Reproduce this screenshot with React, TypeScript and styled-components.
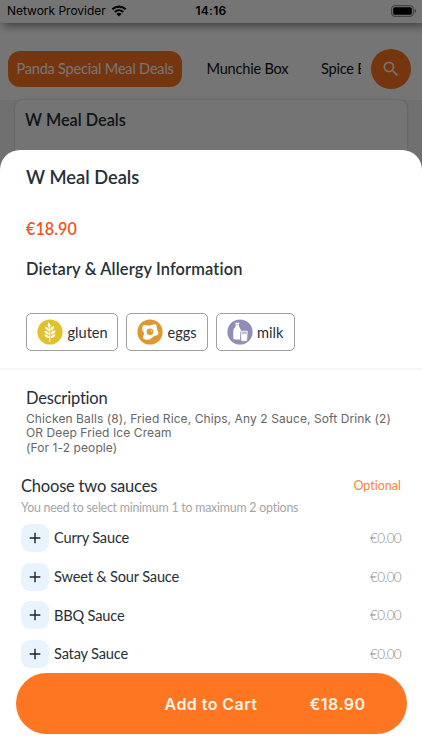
import React from "react";
import styled, { createGlobalStyle } from "styled-components";

const GlobalStyle = createGlobalStyle`
  *, *::before, *::after { box-sizing: border-box; }
  body { margin: 0; background: #fff; font-variant-ligatures: none; }
  button { font-variant-ligatures: none; }
`;

const Screen = styled.div`
  position: relative;
  width: 422px;
  height: 750px;
  overflow: hidden;
  background: #f4f4f4;
  font-family: Lato, "Liberation Sans", sans-serif;
  color: #263036;
`;

const StatusBar = styled.header`
  position: relative;
  display: grid;
  grid-template-columns: 1fr auto 1fr;
  align-items: center;
  height: 23px;
  padding: 0 5px 1px 7px;
  background: #fff;
  box-shadow: 3px 3px 8px rgba(0, 0, 0, 0.45);
  font-family: Inter, sans-serif;
  font-size: 12px;
  line-height: 22px;
  color: #000;
`;

const Carrier = styled.div`
  display: flex;
  align-items: center;
  gap: 5px;
  letter-spacing: -0.02px;
`;

const Clock = styled.div`
  margin-left: -2px;
  font-weight: 600;
  letter-spacing: 0.3px;
`;

const BatterySlot = styled.div`
  display: flex;
  justify-content: flex-end;
`;

const CategoryBar = styled.nav`
  display: flex;
  align-items: center;
  height: 77px;
  padding: 15px 11px 0 8px;
  background: #fff;
`;

const Categories = styled.div`
  display: flex;
  align-items: center;
  width: 353px;
  overflow: hidden;
  white-space: nowrap;
`;

const Category = styled.button<{ $active?: boolean }>`
  flex: none;
  height: 36px;
  padding: 0 8.4px;
  margin-right: 16px;
  border: 0;
  border-radius: 12px;
  background: ${(p) => (p.$active ? "#ff7622" : "transparent")};
  color: ${(p) => (p.$active ? "#fff" : "#111")};
  font-family: Lato, sans-serif;
  font-weight: 400;
  font-size: 14.6px;
  line-height: 36px;
  letter-spacing: -0.23px;
`;

const SearchButton = styled.button`
  display: flex;
  align-items: center;
  justify-content: center;
  flex: none;
  width: 40px;
  height: 40px;
  margin-left: 10px;
  padding: 0;
  border: 0;
  border-radius: 50%;
  background: #ff7622;
  color: #fff;
`;

const MenuCard = styled.section`
  height: 120px;
  margin: 0 15px;
  padding: 8px 10px;
  border-radius: 8px;
  background: #fcfcfc;
  box-shadow: 0 0 3px rgba(0, 0, 0, 0.22);
  font-weight: 600;
  font-size: 16.3px;
  line-height: 24px;
`;

const Scrim = styled.div`
  position: absolute;
  inset: 0;
  background: rgba(0, 0, 0, 0.54);
`;

const Sheet = styled.main`
  position: absolute;
  inset: 150px 0 0;
  display: flex;
  flex-direction: column;
  border-radius: 20px 20px 0 0;
  background: #fff;
`;

const Summary = styled.section`
  height: 220px;
  padding: 14px 26px 0;
  border-bottom: 2px solid #f6f6f6;
`;

const Title = styled.h1`
  margin: 0;
  font-weight: 600;
  font-size: 18.3px;
  line-height: 26px;
`;

const Price = styled.div`
  margin-top: 27px;
  color: #f4511e;
  font-weight: 600;
  font-size: 16.2px;
  line-height: 24px;
`;

const Subtitle = styled.h2`
  margin: 15.5px 0 0;
  font-weight: 600;
  font-size: 16.4px;
  line-height: 24px;
  letter-spacing: 0.14px;
`;

const Allergens = styled.div`
  display: flex;
  gap: 8px;
  margin-top: 32.5px;
`;

const Allergen = styled.div<{ $width: number }>`
  display: flex;
  align-items: center;
  gap: 4.5px;
  width: ${(p) => p.$width}px;
  height: 38px;
  padding-left: 10px;
  border: 1px solid #a0a0a0;
  border-radius: 5px;
  font-size: 14.6px;
`;

const Description = styled.section`
  height: 105px;
  padding: 16px 26px 0;
`;

const SectionHeading = styled.h3`
  margin: 0;
  font-weight: 400;
  font-size: 16.5px;
  line-height: 24px;
  letter-spacing: -0.2px;
`;

const Details = styled.p`
  margin: 2px -10px 0 0;
  color: #666;
  font-family: Inter, sans-serif;
  font-size: 12px;
  line-height: 14.4px;
  letter-spacing: 0.09px;
  white-space: pre-line;
`;

const OptionGroup = styled.section`
  padding: 0 21px;
`;

const GroupHeader = styled.div`
  display: flex;
  align-items: center;
  justify-content: space-between;
  height: 21px;
`;

const OptionalTag = styled.span`
  color: #ff7f3a;
  font-size: 12.5px;
`;

const Hint = styled.p`
  margin: 3px 0 1.5px;
  color: #a5a5a5;
  font-size: 12.4px;
  line-height: 18px;
  letter-spacing: -0.23px;
  white-space: nowrap;
`;

const OptionRow = styled.div`
  display: flex;
  align-items: center;
  height: 38.7px;
  font-size: 14.6px;
  letter-spacing: -0.18px;
`;

const AddOption = styled.button`
  display: flex;
  align-items: center;
  justify-content: center;
  width: 28px;
  height: 28px;
  margin-right: 5px;
  padding: 0;
  border: 0;
  border-radius: 9px;
  background: #e8f3fe;
  color: #1c2226;
`;

const OptionPrice = styled.span`
  margin-left: auto;
  color: #8c8c8c;
  font-weight: 300;
  font-size: 13.5px;
  letter-spacing: -0.7px;
`;

const CartButton = styled.button`
  position: absolute;
  left: 15.5px;
  bottom: 16px;
  display: grid;
  grid-template-columns: 1fr auto 1fr;
  align-items: center;
  width: 391px;
  height: 61px;
  padding: 0;
  border: 0;
  border-radius: 31px;
  background: #ff7622;
  color: #fff3e6;
  font-family: Inter, sans-serif;
  font-weight: 600;
  font-size: 16px;
  line-height: 24px;
  letter-spacing: 0.45px;
`;

const CartLabel = styled.span`
  grid-column: 2;
`;

const CartTotal = styled.span`
  justify-self: end;
  padding-right: 41px;
`;

const WifiIcon = () => (
  <svg width="16" height="12" viewBox="0 0 16 12">
    <path d="M1.3 4.3a9.8 9.8 0 0 1 13.4 0M3.8 6.9a6.2 6.2 0 0 1 8.4 0" fill="none" stroke="#000" strokeWidth="2.1" />
    <path d="M8 11.5 5.4 8.9a3.8 3.8 0 0 1 5.2 0Z" />
  </svg>
);

const BatteryIcon = () => (
  <svg width="26" height="12" viewBox="0 0 26 12">
    <rect x=".7" y=".7" width="21.6" height="10.6" rx="2.8" fill="none" stroke="#777" />
    <rect x="2.2" y="2.2" width="18.6" height="7.6" rx="1.5" />
    <path d="M23.8 4v4q1.4-.6 1.4-2t-1.4-2Z" fill="#777" />
  </svg>
);

const SearchIcon = () => (
  <svg width="20" height="20" viewBox="0 0 24 24" fill="currentColor">
    <path d="M15.5 14h-.79l-.28-.27A6.47 6.47 0 0 0 16 9.5 6.5 6.5 0 1 0 9.5 16c1.61 0 3.09-.59 4.23-1.57l.27.28v.79l5 4.99L20.49 19l-4.99-5Zm-6 0A4.5 4.5 0 1 1 14 9.5 4.49 4.49 0 0 1 9.5 14Z" />
  </svg>
);

const PlusIcon = () => (
  <svg width="12" height="12" viewBox="0 0 12 12">
    <path d="M6 .7v10.6M.7 6h10.6" stroke="currentColor" strokeWidth="1.4" />
  </svg>
);

const GlutenIcon = () => (
  <svg width="26" height="26" viewBox="0 0 26 26">
    <circle cx="13" cy="13" r="12.6" fill="#e2c12e" />
    <path d="M12.8 22.5V9" stroke="#fff" strokeWidth="1" />
    <g fill="#fff">
      <path d="M11.5 3.5c2.6 1.8 2.8 4 1 6-2-1.8-2.500-4-1-6Z" />
      <path d="M8.2 7.8c2.6.6 3.9 2 4 4.2-2.4-.4-4-1.9-4-4.2Z" />
      <path d="M7.2 11.7c3.1.3 4.7 1.7 5.1 3.8-2.9 0-4.7-1.4-5.1-3.8Z" />
      <path d="M7.4 15.6c2.9.2 4.5 1.4 4.9 3.5-2.8 0-4.5-1.2-4.9-3.5Z" />
      <path d="M16.8 7c.5 2.3-.6 4-3.2 4.8-.3-2.2.8-4 3.2-4.8Z" />
      <path d="M18.4 11.2c0 2.5-1.5 4-4.7 4.2.1-2.4 1.7-3.9 4.7-4.2Z" />
      <path d="M18.4 15.2c-.2 2.4-1.7 3.7-4.7 3.8.2-2.2 1.7-3.6 4.7-3.8Z" />
    </g>
  </svg>
);

const EggIcon = () => (
  <svg width="26" height="26" viewBox="0 0 26 26">
    <circle cx="13" cy="13" r="12.6" fill="#de982c" />
    <path
      d="M6.2 6.6c1.5-1.4 3.6.1 5.8 0 2.5-.1 4.4-2 6.2-1.3 1.8.7 1.4 3.1 1.9 4.9.5 1.9 1.9 3.3 1.2 4.9-.8 1.8-3 1.3-4.7 2.3-1.8 1-2.9 3.2-5.6 3.3-2.2.1-4.7-.6-5.1-2.3-.4-1.6 1.4-2.4 1.2-4-.2-1.4-1.800-2.200-2-4.100-.1-1.400.1-2.800 1.100-3.700Z"
      fill="#fff"
    />
    <circle cx="13" cy="12.8" r="3.3" fill="#de982c" />
    <path d="M13.300 11.100a1.900 1.900 0 0 1 1.500 2" fill="none" stroke="#fff" strokeWidth=".6" />
  </svg>
);

const MilkIcon = () => (
  <svg width="26" height="26" viewBox="0 0 26 26">
    <circle cx="13" cy="13" r="12.6" fill="#918db4" />
    <path d="M8.4 3.7h4v1.2h-.4v2.3c.2 1.7 1.9 2.3 1.9 4.2v1h-.8v8H7.6c-.9 0-1.3-.5-1.3-1.3v-7.7c0-2 2-2.5 2.4-4.2V4.9h-.3Z" fill="#fff" />
    <path d="M8.8 5.6h3" stroke="#aaa6c8" strokeWidth=".6" />
    <path d="M14 12.2h6.3l-.7 9.5h-4.900Z" fill="#c3bfd8" stroke="#fff" strokeWidth=".8" />
    <path d="M14.7 15.2h5.2l-.5 6.1h-4.300Z" fill="#fff" />
  </svg>
);

const allergens = [
  { name: "gluten", width: 92, icon: <GlutenIcon /> },
  { name: "eggs", width: 81.5, icon: <EggIcon /> },
  { name: "milk", width: 79.5, icon: <MilkIcon /> },
];

const sauces = ["Curry Sauce", "Sweet & Sour Sauce", "BBQ Sauce", "Satay Sauce"];

export default function App() {
  return (
    <Screen>
      <GlobalStyle />
      <StatusBar>
        <Carrier>
          Network Provider
          <WifiIcon />
        </Carrier>
        <Clock>14:16</Clock>
        <BatterySlot>
          <BatteryIcon />
        </BatterySlot>
      </StatusBar>
      <CategoryBar>
        <Categories>
          <Category $active>Panda Special Meal Deals</Category>
          <Category>Munchie Box</Category>
          <Category>Spice Box</Category>
        </Categories>
        <SearchButton aria-label="Search">
          <SearchIcon />
        </SearchButton>
      </CategoryBar>
      <MenuCard>W Meal Deals</MenuCard>
      <Scrim />
      <Sheet>
        <Summary>
          <Title>W Meal Deals</Title>
          <Price>€18.90</Price>
          <Subtitle>Dietary &amp; Allergy Information</Subtitle>
          <Allergens>
            {allergens.map((a) => (
              <Allergen key={a.name} $width={a.width}>
                {a.icon}
                {a.name}
              </Allergen>
            ))}
          </Allergens>
        </Summary>
        <Description>
          <SectionHeading>Description</SectionHeading>
          <Details>
            {"Chicken Balls (8), Fried Rice, Chips, Any 2 Sauce, Soft Drink (2)\nOR Deep Fried Ice Cream\n(For 1-2 people)"}
          </Details>
        </Description>
        <OptionGroup>
          <GroupHeader>
            <SectionHeading>Choose two sauces</SectionHeading>
            <OptionalTag>Optional</OptionalTag>
          </GroupHeader>
          <Hint>You need to select minimum 1 to maximum 2 options</Hint>
          {sauces.map((name) => (
            <OptionRow key={name}>
              <AddOption aria-label={`Add ${name}`}>
                <PlusIcon />
              </AddOption>
              {name}
              <OptionPrice>€0.00</OptionPrice>
            </OptionRow>
          ))}
        </OptionGroup>
        <CartButton>
          <CartLabel>Add to Cart</CartLabel>
          <CartTotal>€18.90</CartTotal>
        </CartButton>
      </Sheet>
    </Screen>
  );
}
